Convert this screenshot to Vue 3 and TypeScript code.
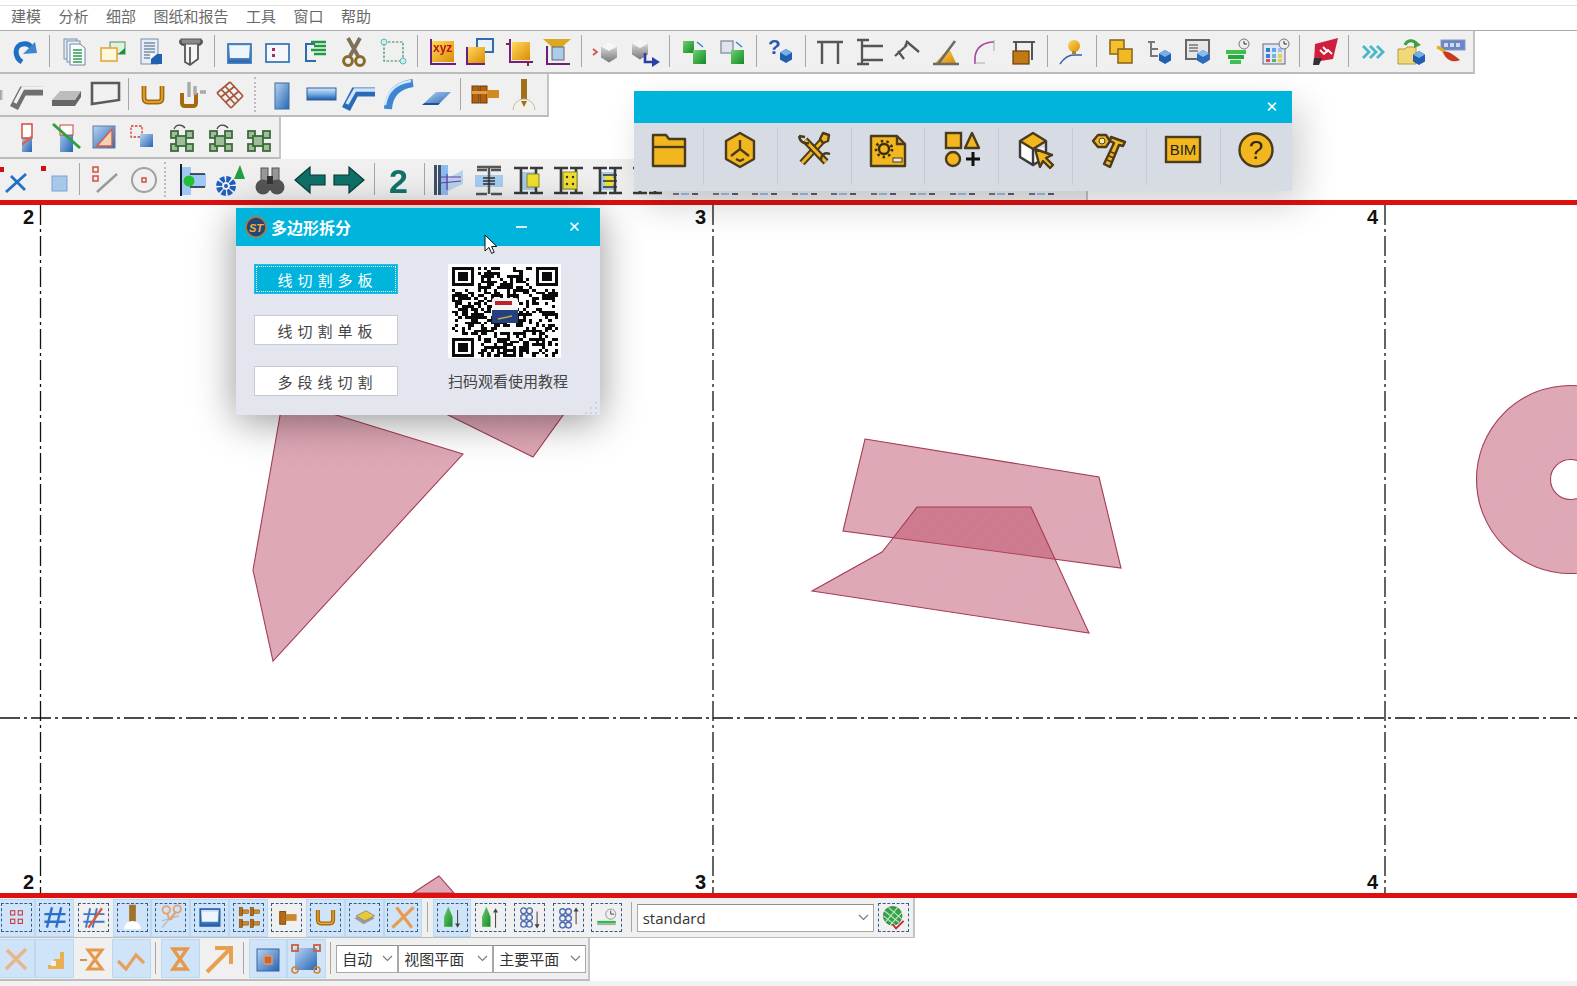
<template>
  <div class="page">
    <svg class="defs" width="0" height="0">
      <defs>
        <linearGradient id="gb" x1="0" y1="0" x2="0" y2="1"><stop offset="0" stop-color="#d8e9fb" /><stop offset=".55" stop-color="#6ea6e0" /><stop offset="1" stop-color="#1e57a4" /></linearGradient>
        <linearGradient id="gh" x1="0" y1="0" x2="1" y2="1"><stop offset="0" stop-color="#b7d4f2" /><stop offset="1" stop-color="#2566b4" /></linearGradient>
        <linearGradient id="gy" x1="0" y1="0" x2="1" y2="1"><stop offset="0" stop-color="#ffd95a" /><stop offset="1" stop-color="#dc8c06" /></linearGradient>
        <linearGradient id="gr" x1="0" y1="0" x2="0" y2="1"><stop offset="0" stop-color="#f2f2f2" /><stop offset="1" stop-color="#777" /></linearGradient>
        <linearGradient id="gg" x1="0" y1="0" x2="1" y2="1"><stop offset="0" stop-color="#6fd06f" /><stop offset="1" stop-color="#128a26" /></linearGradient>
      </defs>
    </svg>

    <div class="menu">
      <span v-for="m in menus" :key="m">{{ m }}</span>
    </div>

    <div v-for="row in topRows" :key="row.cls" class="tb-row" :class="row.cls">
      <template v-for="(it, i) in row.items" :key="i">
        <div v-if="it.kind === 'sep'" class="sep"></div>
        <div v-else-if="it.kind === 'grip'" class="grip"></div>
        <div v-else-if="it.kind === 'stub'" class="stub"></div>
        <div v-else class="btn"><svg class="ico" viewBox="0 0 32 32" v-html="icons[it.icon]"></svg></div>
      </template>
    </div>

    <div class="canvas">
      <svg class="drawing" viewBox="0 205 1577 688" preserveAspectRatio="none">
        <defs>
          <pattern id="hatch" width="2" height="2" patternUnits="userSpaceOnUse" patternTransform="rotate(45)">
            <rect width="2" height="2" fill="#bf4c68" fill-opacity=".46" />
            <rect width="1" height="2" fill="#8f2f48" fill-opacity=".08" />
          </pattern>
        </defs>
        <g fill="url(#hatch)" stroke="#a63b55" stroke-width="1.1">
          <polygon points="281,410 253,570 273,661 463,454 320,410" />
          <polygon points="440,411 533,457 566,411" />
          <polygon points="865,439 1099,477 1121,568 843,531" />
          <polygon points="917,507 1031,507 1089,633 812,591 882,552 890,542" />
          <polygon points="439,876 413,893 454,893" />
          <path fill-rule="evenodd" d="M1476.5 479.5a94 94 0 1 0 188 0a94 94 0 1 0 -188 0zM1550.5 479.5a20 20 0 1 0 40 0a20 20 0 1 0 -40 0z" />
        </g>
        <g stroke="#111" stroke-width="1.3" stroke-dasharray="20 4 3 4" fill="none">
          <line v-for="x in gridX" :key="x" :x1="x" y1="205" :x2="x" y2="893" />
          <line x1="0" y1="718" x2="1577" y2="718" />
        </g>
        <g class="axis">
          <template v-for="a in axes" :key="a.t">
            <text :x="a.x" y="224" text-anchor="end">{{ a.t }}</text>
            <text :x="a.x" y="889" text-anchor="end">{{ a.t }}</text>
          </template>
        </g>
      </svg>
    </div>

    <div v-for="row in bottomRows" :key="row.cls" class="tb-row" :class="row.cls">
      <template v-for="(it, i) in row.items" :key="i">
        <div v-if="it.kind === 'sep'" class="sep"></div>
        <div v-else-if="it.kind === 'combo'" class="combo" :style="{ width: it.w + 'px' }">
          <span>{{ it.label }}</span>
          <svg width="11" height="7" viewBox="0 0 11 7"><path d="M1 1l4.5 4.5L10 1" fill="none" stroke="#777" stroke-width="1.1" /></svg>
        </div>
        <div v-else class="btn" :class="{ on: it.on }">
          <svg class="ico" viewBox="0 0 32 32" v-html="icons[it.icon]"></svg>
        </div>
      </template>
    </div>
    <div class="status"></div>

    <!-- 悬浮工具条 -->
    <div class="float-bar">
      <div class="bar-title"><span class="x-mark">✕</span></div>
      <div class="bar-body">
        <div v-for="(b, i) in barIcons" :key="i" class="bar-cell">
          <svg width="40" height="40" viewBox="-2 -2 40 40" v-html="b"></svg>
        </div>
      </div>
    </div>

    <!-- 多边形拆分 -->
    <div class="dialog">
      <div class="dlg-title">
        <svg width="22" height="22" viewBox="0 0 22 22">
          <circle cx="11" cy="11" r="10" fill="#24457c" stroke="#b9772a" stroke-width="1.5" />
          <text x="11" y="15.5" text-anchor="middle" class="logo-t">ST</text>
        </svg>
        <span class="dlg-name">多边形拆分</span>
        <span class="dlg-min"></span>
        <span class="dlg-close">✕</span>
      </div>
      <div class="dlg-body">
        <div class="dlg-btns">
          <button class="cut active"><span>线切割多板</span></button>
          <button class="cut"><span>线切割单板</span></button>
          <button class="cut"><span>多段线切割</span></button>
        </div>
        <div class="dlg-qr">
          <div class="qr-box">
            <svg class="qr" viewBox="0 0 33 33" preserveAspectRatio="none"><path :d="qrPath" fill="#0b0b0b" shape-rendering="crispEdges" /></svg>
            <svg class="qr-logo" viewBox="0 0 26 25">
              <rect width="26" height="25" rx="2" fill="#f4f4f4" />
              <rect x="3" y="3" width="17" height="4" fill="#b8232e" />
              <rect y="12" width="26" height="13" fill="#24407f" />
              <path d="M6 21l14-3" stroke="#c7a64a" stroke-width="1.5" />
            </svg>
          </div>
          <div class="qr-cap">扫码观看使用教程</div>
        </div>
      </div>
      <svg class="resize" width="14" height="14" viewBox="0 0 14 14">
        <path d="M10 1h2v2h-2zM5 6h2v2H5zM10 6h2v2h-2zM0 11h2v2H0zM5 11h2v2H5zM10 11h2v2h-2z" fill="#cfd2da" />
      </svg>
    </div>

    <svg class="cursor" width="14" height="21" viewBox="0 0 14 21">
      <path d="M1 1v16l4-3.6 2.6 6 2.6-1.1-2.6-5.8h5.2z" fill="#fff" stroke="#111" stroke-width="1" />
    </svg>
  </div>
</template>

<script setup lang="ts">
interface Item {
  kind: 'btn' | 'sep' | 'grip' | 'stub' | 'combo'
  icon: string
  on: boolean
  label: string
  w: number
}

const R = (x: number, y: number, w: number, h: number, f: string, s = 'none', sw = 1, extra = '') =>
  `<rect x="${x}" y="${y}" width="${w}" height="${h}" fill="${f}" stroke="${s}" stroke-width="${sw}" ${extra}/>`
const L = (d: string, s: string, w = 1.5, f = 'none') =>
  `<path d="${d}" fill="${f}" stroke="${s}" stroke-width="${w}"/>`
const P = (d: string, f: string) => `<path d="${d}" fill="${f}"/>`
const C = (x: number, y: number, r: number, f: string, s = 'none', sw = 1, extra = '') =>
  `<circle cx="${x}" cy="${y}" r="${r}" fill="${f}" stroke="${s}" stroke-width="${sw}" ${extra}/>`
const T = (x: number, y: number, size: number, fill: string, t: string) =>
  `<text x="${x}" y="${y}" font-family="Liberation Sans, sans-serif" font-weight="700" font-size="${size}" fill="${fill}">${t}</text>`

const DASH = 'stroke-dasharray="2.5 1.5"'
const cube = (x: number, y: number, top: string, side: string) =>
  P(`M${x} ${y}l6 3.5v7l-6 3.5-6-3.5v-7z`, side) + P(`M${x} ${y}l6 3.5-6 3.5-6-3.5z`, top)
const bigCube = (x: number, y: number) =>
  P(`M${x} ${y}l8 4.5v11l-8 5-8-5v-11z`, 'url(#gr)') + P(`M${x} ${y}l8 4.5-8 4.5-8-4.5z`, '#f6f6f6')
const nodes = (arc: string) =>
  [[6, 10], [21, 10], [6, 23], [21, 23]].map(([x, y]) => R(x, y, 7, 7, '#9dbf98', '#3d6b3d', 1.8)).join('') +
  R(11, 15, 10, 10, '#9dbf98', '#3d6b3d', 1.8) + arc
const bolt = (x: number, y: number) =>
  R(x, y, 4, 10, '#b96a12', '#6a3d08', .6) + R(x + 4, y + 3, 7, 4, '#d08a20', '#6a3d08', .6)
const cones = (arrow: string) =>
  P('M11 3l5 12v12H6V15z', 'url(#gg)') + arrow
const ibeam = (mid: string) =>
  R(9, 8, 15, 18, '#a6ccf2') + L('M2 4h14M18 4h13M2 29h14M18 29h13M9 4v25M24 4v25', '#3a3a3a', 2.6) + mid
const under = R(3, 29, 6, 2, '#6f7890') + R(11, 29, 8, 2, '#9cc2e8') + R(22, 29, 6, 2, '#55607a')

const icons: Record<string, string> = {
  redo: L('M13 26C5 21 5 9 14 8c4-1 7 1 9 4', '#1f6fc4', 5) + P('M14 18l14-1-2-11z', '#3d86cf'),
  docs: R(6, 3, 13, 20, '#dfe8f3', '#7d94ad') + R(9, 5, 13, 21, '#edf2f8', '#7d94ad') + P('M12 8h10l5 4v17H12z', '#fbfcfe') + L('M12 8h10l5 4v17H12z', '#6e879f', 1) + L('M15 14h9M15 17h9M15 20h9M15 23h9M15 26h9', '#2e9b4f', 1.6),
  copyOr: R(13, 6, 15, 12, '#dff2dc', '#5b8a5b') + P('M21 18l7-6v6z', '#14933a') + R(4, 12, 16, 13, '#fff6dc', '#e3a83a', 1.6),
  docBlue: R(6, 3, 17, 25, '#e6edf5', '#7890a8') + L('M9 7h11M9 10h11M9 13h11M9 16h11M9 19h6M9 22h6', '#7890a8', 1.3) + R(16, 18, 11, 10, '#1f62b0') + P('M16 18h6l-6 5z', '#fff'),
  drawing: P('M11 8h13v15l-8 6-5-3z', '#f5f5f5') + L('M11 8v18l5 3 8-6V8M16 29V11', '#555', 1.8) + R(7, 3, 20, 5, '#8a8a8a', '#555') + L('M7 4c-2 2 0 5 3 5M27 4c2 2 0 5-3 5', '#555', 2.2),
  win: R(5, 8, 23, 19, 'url(#gb)', '#3c78b8', 1.8) + R(7, 10, 19, 12, '#eef5fc'),
  winDots: R(5, 8, 23, 18, '#f4f8fd', '#3c78b8', 1.8) + R(11, 12, 3, 3, '#a82c5c') + R(11, 18, 3, 3, '#a82c5c'),
  list: L('M15 8H6v17h10', '#2d6cb0', 2) + L('M11 6h15M14 10h12M11 14h15M14 18h12', '#1e9b40', 2.4),
  scissors: L('M10 2l10 18M22 2L12 20', '#7d7258', 3.8) + C(10, 25, 4.4, 'none', '#8a6c2a', 3) + C(22, 25, 4.4, 'none', '#8a6c2a', 3),
  selBox: R(7, 6, 19, 19, 'none', '#3d8a55', 1.2, DASH) + C(7, 6, 3, '#cdeee8', '#63b6b6') + C(26, 25, 3, '#cdeee8', '#63b6b6'),
  xyz: R(6, 5, 22, 21, 'url(#gy)') + L('M5 3v25h25', '#6a1f7a', 2) + T(7, 16, 12, '#c01212', 'xyz'),
  goldWin: R(13, 3, 16, 13, '#eaf2fb', '#2d6cb0', 2) + R(3, 11, 18, 16, 'url(#gy)') + L('M3 11v17h18', '#6a1f7a', 2),
  goldCrop: R(9, 6, 18, 18, 'url(#gy)') + L('M7 3v23h23M3 8h4M25 26v4', '#7a1f6a', 2),
  funnel: P('M2 3h28l-9 8H11z', '#dca822') + R(11, 11, 12, 13, '#a9cdea', '#666') + L('M6 10v18h23', '#6a1f7a', 2),
  cubeIn: bigCube(19, 6) + L('M3 13l4 3-4 3', '#d25040', 1.6),
  cubeOut: bigCube(11, 3) + L('M16 17v9h8', '#2a3fa8', 2.6) + P('M23 21l8 5-8 5z', '#2a3fa8'),
  greenA: R(5, 5, 11, 12, 'url(#gg)') + R(15, 14, 13, 14, 'url(#gg)') + L('M19 6l6 5', '#3388cc', 1.5),
  greenB: R(5, 5, 12, 12, '#dfe3ee', '#8890a4', 1.4) + R(15, 14, 13, 14, 'url(#gg)') + L('M20 6l6 5', '#3388cc', 1.5),
  help: T(3, 18, 21, '#2b55b0', '?') + cube(21, 13, '#79aee6', '#1f5fb0'),
  fPost: L('M3 6h26M8 6v22M24 6v22', '#555', 2.4),
  fSide: L('M4 4h12M4 28h12M9 4v24M9 10h21M9 24h21', '#555', 2.3),
  fDiag: L('M4 20L16 9M15 5l13 11M7 15l6 8M17 5l-3 5', '#555', 2.3),
  fAng: P('M5 27L19 12l7 15z', 'url(#gy)') + L('M3 28h26M8 28L25 5', '#6b6b6b', 2.6),
  fArc: L('M7 28V21C8 11 16 6 26 6', '#a5479f', 1.6) + L('M26 4v11M7 27h10', '#aaa', 1),
  fCol: L('M6 6h22M9 6v12M25 6v18', '#555', 2) + R(6, 15, 16, 13, '#c07a14', '#6a3d08', 1.2),
  pin: C(18, 10, 6, 'url(#gy)') + L('M4 28c4-6 8-9 14-9h8', '#3a60a8', 1.5) + R(16, 15, 4, 3, '#a68a2a'),
  twoGold: R(5, 4, 14, 14, '#f4c02e', '#8a6a20', 1.6) + R(13, 13, 14, 14, '#f4b820', '#8a6a20', 1.6),
  hier: L('M5 6h7M8 6v14h7M8 13h7', '#777', 2) + cube(22, 14, '#79aee6', '#1f5fb0'),
  tableCube: R(4, 4, 23, 19, '#e6e6e6', '#666', 2) + L('M7 9h9M7 12h9M7 15h9', '#777', 1.5) + cube(21, 14, '#8dbcec', '#2a6cc0'),
  clockStack: C(24, 8, 5, '#eee', '#777') + L('M24 5v3h3', '#333', 1) + R(6, 14, 20, 4, '#3fbf4f') + R(8, 19, 16, 4, '#23a93c') + R(10, 24, 11, 4, '#3fbf4f'),
  cal: R(4, 8, 22, 20, '#dfe6f5', '#667') + R(7, 12, 4, 4, '#2f7fd0') + R(13, 12, 4, 4, '#5fa8e8') + R(19, 12, 4, 4, '#9fc4ea') + R(7, 18, 4, 4, '#3f7fd0') + R(13, 18, 4, 4, '#7ab0e0') + R(19, 18, 4, 4, '#e2d050') + R(7, 23, 4, 3, '#d85050') + R(13, 23, 4, 3, '#60b060') + R(19, 23, 4, 3, '#e2d050') + C(25, 8, 5, '#eee', '#777') + L('M25 5v3h3', '#333', 1),
  flag: P('M7 8l23-6-5 21-19 3z', '#cf1f3c') + P('M6 22h8l-3 7H5z', '#333') + L('M12 14l4 4 4-4 4 4M15 11l5 5', '#fff', 1.8),
  chev: L('M6 10l6 6-6 6M13 10l6 6-6 6M20 10l6 6-6 6', '#46b8c8', 2.8),
  folderCube: P('M3 13h7l2-2h9v17H3z', '#f0d878') + L('M3 13h7l2-2h9v17H3z', '#b39a40', 1) + L('M10 9c2-5 8-6 12-1', '#3ea03e', 3) + P('M19 4l7 5-7 3z', '#3ea03e') + cube(24, 15, '#79aee6', '#1f5fb0'),
  paint: R(7, 4, 24, 10, '#6a86c8', '#8a9ac0') + R(10, 7, 4, 4, '#cfd8ee') + R(16, 7, 4, 4, '#cfd8ee') + R(22, 7, 4, 4, '#cfd8ee') + L('M3 11c3 1 6 3 8 6', '#e0b020', 3) + P('M9 16c5-2 12 4 17 8-6 3-14 1-17-8z', '#c63a1e'),
  elbowG: L('M3 29l9-17h20', '#6f6f6f', 9) + L('M4 24l8-15h20', '#f0f0f0', 3.5),
  slab: P('M2 21L10 12h21l-6 9z', '#bcbcbc') + P('M2 21h23l6-9v6l-6 9H2z', '#666'),
  panel: P('M4 4h27v17l-27 4z', '#f1f1f1') + L('M4 4h27v17l-27 4z', '#5a5a5a', 2.6),
  cup: L('M7 7v12c0 3 2 4 4 4h10c3 0 4-2 4-4V7', '#a56a10', 4.8) + L('M7 7v12c0 3 2 4 4 4h10c3 0 4-2 4-4V7', '#f0b030', 1.4),
  cupHand: L('M6 14v10c0 2 1 3 3 3h8c2 0 3-1 3-3V14', '#a56a10', 4) + L('M13 3v15M19 7v9M24 13h6', '#aaa', 3.4),
  net: L('M3 14l14 15M7 10l14 15M11 7l14 15M16 3l13 14M3 14L16 3M7 18L21 7M12 23l13-11M17 29l12-12', '#a6563a', 1.7),
  colBlue: R(9, 4, 14, 26, 'url(#gh)', '#3a6aa0'),
  beamBlue: R(2, 9, 29, 12, 'url(#gb)', '#2a5fa4'),
  elbowBlue: L('M3 30l9-17h20', '#2a6ab8', 9) + L('M4 25l8-14h20', '#d0e4fa', 3.5),
  arcBlue: L('M6 30C7 14 16 6 31 4', '#3f86d0', 8) + L('M3 26C5 13 14 4 29 2', '#d5e8fb', 2.4),
  plateBlue: P('M2 26l14-13h15L18 26z', 'url(#gh)') + P('M2 26h16l2-2H5z', '#1e4f96'),
  boltOr: R(3, 7, 7, 17, '#b55f10', '#6a3d08') + R(11, 7, 7, 17, '#b55f10', '#6a3d08') + R(18, 11, 12, 8, '#d08a20') + R(3, 12, 15, 3, '#e0a040'),
  pillar: R(13, 0, 6, 22, '#a0701a') + P('M5 31a11 11 0 0 1 22 0z', '#f4f2e8') + L('M5 31a11 11 0 0 1 22 0', '#bbb', 1) + P('M13 22h6l-3 6z', '#a0701a'),
  colRed: R(11, 12, 10, 19, 'url(#gh)') + R(11, 3, 10, 14, '#fff', '#d04030', 1.4) + P('M11 22l10-8v3l-10 8z', '#e06050'),
  colGreen: R(10, 4, 13, 27, 'url(#gh)') + R(10, 4, 13, 10, '#fff', '#d04030', 1) + L('M3 3L30 27', '#2ea040', 3),
  triBox: R(5, 5, 22, 22, 'url(#gh)', '#6a7a9a') + P('M9 25L24 8v17z', '#f0d2b4') + L('M9 25L24 8v17z', '#d85a4a', 1.4),
  dashSq: R(4, 5, 11, 11, 'none', '#d04030', 1.3, DASH) + R(13, 13, 13, 13, 'url(#gh)'),
  nodeA: nodes(L('M9 8c2-5 8-5 11-1', '#444', 1.3)),
  nodeB: nodes(L('M13 8c2-5 8-5 11-1', '#444', 1.3)),
  nodeC: nodes(''),
  xRed: R(0, 3, 5, 5, '#d01010') + L('M7 28L27 10M12 12l14 14', '#2070c8', 2.8),
  sqRed: R(2, 2, 5, 5, '#d01010') + R(13, 12, 15, 15, '#a8c8ea', '#7aa4d0'),
  lineN: R(4, 3, 5, 5, 'none', '#d05040', 1.5) + R(4, 12, 5, 5, 'none', '#d05040', 1.5) + L('M8 28L28 10', '#999', 2.4),
  target: C(16, 16, 12, 'none', '#a0a0a0', 2) + R(14, 14, 4, 4, 'none', '#d05040', 1.5),
  endBeam: R(7, 3, 9, 28, '#a0c8f5') + R(16, 10, 15, 13, '#a0c8f5') + R(5, 0, 2, 32, '#123') + L('M15 10h15M15 23h15', '#123', 1.6) + C(14, 17, 5.5, '#20c030'),
  gearTree: C(11, 22, 7, 'none', '#1f5fc0', 6, 'stroke-dasharray="4 1.5"') + C(11, 22, 2, '#1f5fc0') + P('M25 1l5 14H19z', '#20a040'),
  binoc: R(7, 4, 7, 15, '#999', '#555') + R(18, 4, 7, 15, '#999', '#555') + C(9, 23, 7.5, '#555') + C(23, 23, 7.5, '#555') + R(13, 12, 6, 8, '#333'),
  arrL: P('M1 16l15-13v8h15v10H16v8z', '#0f7068') + L('M1 16l15-13v8h15v10H16v8z', '#0a3c38', 1.2),
  arrR: P('M31 16L16 3v8H1v10h15v8z', '#0f7068') + L('M31 16L16 3v8H1v10h15v8z', '#0a3c38', 1.2),
  two: T(6, 29, 34, '#137267', '2'),
  beamA: R(5, 1, 3, 30, '#40506a') + R(8, 1, 7, 30, '#8cbcef') + R(1, 1, 3, 30, '#40506a') + P('M15 14l15-8v14l-15 7z', '#b8d4ee') + L('M8 13l20 0M8 19l20-2M14 10v16', '#6a3aa0', 1.2),
  beamB: R(2, 11, 28, 12, '#a6ccf2') + L('M4 6h10M18 6h10M16 4v26M3 30h11M18 30h11M4 3h24', '#555', 2.4) + L('M10 14h12M10 17h12M10 20h12', '#333', 1.6),
  beamC: ibeam(R(15, 10, 12, 13, '#f0e030', '#8a8a20')),
  beamD: ibeam(R(11, 8, 14, 17, '#f0e030', '#8a8a20') + C(15, 13, 1.2, '#333') + C(21, 13, 1.2, '#333') + C(15, 20, 1.2, '#333') + C(21, 20, 1.2, '#333')),
  beamE: ibeam(P('M14 10c6 0 9 3 9 7s-3 7-9 7z', '#f0e030') + L('M12 11h14M12 17h14M12 23h14', '#333', 1.4)),
  beamU: under,
  dots4: R(9, 8, 5, 5, 'none', '#c83030', 1.2) + R(18, 8, 5, 5, 'none', '#c83030', 1.2) + R(9, 18, 5, 5, 'none', '#c83030', 1.2) + R(18, 18, 5, 5, 'none', '#c83030', 1.2),
  netBlue: L('M13 4L7 28M24 4l-6 24M4 12h25M4 21h25', '#2a70c8', 2.8),
  netRed: L('M12 5L7 28M20 5l-5 23M4 12h25M4 21h25', '#3a78c8', 2.3) + L('M26 5L10 28', '#e05a38', 2.8),
  spike: P('M12 1h8v20l-4 5-4-5z', '#a07428') + P('M6 30a10 10 0 0 1 20 0z', '#fff'),
  scisOr: L('M6 28L22 9M6 20l20-6', '#bbb', 1.8) + C(11, 7, 4.4, 'none', '#e8a070', 2.2) + C(24, 6, 4.4, 'none', '#e8a070', 2.2) + L('M12 11l3 8M22 10l-6 9', '#e8a070', 2.2),
  winBig: R(5, 6, 23, 20, 'url(#gb)', '#2d5fa8', 2) + R(7, 9, 19, 12, '#eef5fc'),
  bolts: bolt(5, 4) + bolt(18, 4) + bolt(5, 18) + bolt(18, 18),
  boltOne: R(8, 9, 7, 15, '#b96a12', '#6a3d08') + R(15, 12, 13, 8, '#c88a30'),
  sheet: P('M4 17l13-7 11 7-13 7z', '#9a9a9a') + P('M6 14l12-6 10 6-12 6z', '#e6c83a') + L('M6 14l12-6 10 6-12 6z', '#888', 1),
  xOr: L('M4 28L29 4M9 4l18 24', '#e89a50', 3.8),
  coneD: cones(L('M22 7v18', '#444', 1.2) + P('M19 23l3 5 3-5z', '#444')),
  coneU: cones(L('M22 10v18', '#444', 1.2) + P('M19 10l3-5 3 5z', '#444')),
  brickD: C(9, 8, 3.4, 'none', '#4a68b0', 1.6) + C(16, 8, 3.4, 'none', '#4a68b0', 1.6) + C(9, 16, 3.4, 'none', '#4a68b0', 1.6) + C(16, 16, 3.4, 'none', '#4a68b0', 1.6) + C(9, 24, 3.4, 'none', '#4a68b0', 1.6) + C(16, 24, 3.4, 'none', '#4a68b0', 1.6) + L('M25 9v17', '#444', 1.2) + P('M22 24l3 5 3-5z', '#444'),
  brickU: C(9, 9, 3.4, 'none', '#4a68b0', 1.6) + C(16, 9, 3.4, 'none', '#4a68b0', 1.6) + C(9, 17, 3.4, 'none', '#4a68b0', 1.6) + C(16, 17, 3.4, 'none', '#4a68b0', 1.6) + C(9, 25, 3.4, 'none', '#4a68b0', 1.6) + C(16, 25, 3.4, 'none', '#4a68b0', 1.6) + L('M25 7v17', '#444', 1.2) + P('M22 9l3-5 3 5z', '#444'),
  lineClock: C(21, 12, 6, '#eee', '#888') + L('M21 8v4h4', '#333', 1) + R(5, 20, 22, 3, '#23c04a') + R(5, 23, 22, 2, '#aaa'),
  globe: C(15, 14, 11, '#37a04e', '#2a7a3e') + L('M5 8l18 14M10 4l16 14M4 14l14 11M21 4L6 22M26 10L12 25', '#c8ecc0', 1.2) + L('M15 24l4 5 9-9', '#d02030', 2.2),
  xFade: L('M6 26L26 6M7 7l19 19', '#e8b688', 3.6),
  stairs: P('M6 26h20V9h-4v7h-6v6H10v4z', '#e8b050') + R(13, 18, 5, 5, '#f2efe8'),
  hourDash: L('M3 17h7', '#c88850', 1.8) + L('M11 7h14L11 26h14z', '#e8984a', 3),
  check: L('M3 18l8 8L21 12l8 8', '#e8a060', 3.2),
  hour: L('M9 6h14L9 26h14z', '#e8984a', 3.4),
  arrUR: L('M4 29L28 5M12 5h16v16', '#e8a050', 4),
  boxRed: R(5, 6, 22, 22, 'url(#gh)', '#3a64a0') + R(12, 13, 8, 8, '#c8663a', '#e09a6a', 1.4),
  boxCorners: R(5, 5, 22, 22, 'url(#gh)') + R(2, 2, 6, 6, 'none', '#c86040', 1.8) + R(24, 2, 6, 6, 'none', '#c86040', 1.8) + C(5, 27, 3, 'none', '#d88030', 1.6) + C(27, 27, 3, 'none', '#d88030', 1.6),
}

function parse(src: string): Item[] {
  return src.trim().split(/\s+/).map((s) => {
    if (s === 'sep' || s === 'grip' || s === 'stub') return { kind: s, icon: '', on: false, label: '', w: 0 }
    if (s.startsWith('combo:')) {
      const [, label, w] = s.split(':')
      return { kind: 'combo', icon: '', on: false, label, w: Number(w) }
    }
    return { kind: 'btn', icon: s.replace('*', ''), on: s.endsWith('*'), label: '', w: 0 }
  })
}

const menus = ['建模', '分析', '细部', '图纸和报告', '工具', '窗口', '帮助']

const topRows = [
  { cls: 'row-1', items: parse(`redo sep docs copyOr docBlue drawing sep win winDots list scissors selBox sep xyz goldWin goldCrop funnel sep
    cubeIn cubeOut sep greenA greenB sep help sep fPost fSide fDiag fAng fArc fCol sep pin sep twoGold hier tableCube clockStack cal sep flag sep chev folderCube paint`) },
  { cls: 'row-2', items: parse('stub elbowG slab panel sep cup cupHand net grip colBlue beamBlue elbowBlue arcBlue plateBlue sep boltOr pillar') },
  { cls: 'row-3', items: parse('colRed colGreen triBox dashSq nodeA nodeB nodeC') },
  { cls: 'row-4', items: parse(`xRed sqRed sep lineN target grip endBeam gearTree binoc arrL arrR sep two sep beamA beamB beamC beamD beamE
    beamC beamU beamU beamU beamU beamU beamU beamU beamU beamU beamU`) },
]

const bottomRows = [
  { cls: 'row-5', items: parse(`dots4* netBlue* netRed spike* scisOr* winBig* bolts* boltOne cup* sheet* xOr* sep coneD* coneU brickD brickU lineClock sep combo:standard:237 globe`) },
  { cls: 'row-6', items: parse('xFade* stairs* hourDash check* sep hour* arrUR sep boxRed* boxCorners* sep combo:自动:62 combo:视图平面:95 combo:主要平面:93') },
]

const gridX = [40.5, 713, 1385]
const axes = [
  { t: '2', x: 34 },
  { t: '3', x: 706 },
  { t: '4', x: 1378 },
]

const ST = 'fill="#f2b71e" stroke="#4a3a1e" stroke-width="2.4"'
const shape = (d: string) => `<path d="${d}" ${ST} stroke-linejoin="round"/>`
const barIcons = [
  shape('M2 3h13l3 4h16v27H2z') + L('M2 15h32', '#4a3a1e', 2.4),
  shape('M18 1l14 8v18l-14 8-14-8V9z') + L('M18 8v9M9 24l9-7 9 7M14 27l4 2 4-2', '#4a3a1e', 2.4),
  L('M6 31L28 7', '#4a3a1e', 7) + L('M6 31L28 7', '#f2b71e', 3) + shape('M27 1l6 2-1 6-5 2-3-4z') + L('M9 8l21 22', '#4a3a1e', 7) + L('M9 8l21 22', '#f2b71e', 3) + L('M3 4c1 6 5 8 10 7M3 4l6 1M34 22c-5-2-9 0-9 6', '#4a3a1e', 2.4),
  shape('M1 4h26l8 8v22H1z') + L('M27 4v8h8', '#4a3a1e', 2.4) + C(14, 17, 5, 'none', '#3a2c10', 2.4) + C(14, 17, 8, 'none', '#3a2c10', 2.6, 'stroke-dasharray="2.5 3.2"') + R(23, 26, 9, 4, '#e9e9e0', '#4a3a1e', 1),
  `<rect x="2" y="1" width="15" height="15" ${ST}/>` + shape('M28 1l7 15H21z') + `<circle cx="9" cy="27" r="7" ${ST}/>` + L('M22 27h14M29 20v14', '#111', 3),
  P('M2 9v16l13 8V17z', '#fff') + P('M15 17v16l13-8V15z', '#f4f4f4') + shape('M15 1l13 8-13 8-13-8z') + L('M2 9v16l13 8 13-8V9M15 17v16', '#3a3a3a', 2.4) + shape('M17 17l17 6-6 3 7 7-3 3-7-7-3 6z'),
  shape('M2 9l5-6h8l4 6-4 6H7z') + C(11, 9, 3, '#f8e9a0', '#4a3a1e', 1) + shape('M20 5l14 5-2 4-4-1-9 22-6-3 10-21-4-2z') + L('M20 20l5 2M18 24l5 2M16 28l5 2', '#4a3a1e', 1.8),
  `<rect x="1" y="5" width="34" height="25" ${ST}/>` + `<text x="18" y="23" text-anchor="middle" font-family="Liberation Sans, sans-serif" font-size="15" fill="#222">BIM</text>`,
  `<circle cx="18" cy="18" r="16.5" ${ST}/>` + `<text x="18" y="27" text-anchor="middle" font-family="Liberation Sans, sans-serif" font-size="26" fill="#33280f">?</text>`,
]

// 二维码图案
function buildQr(): string {
  const n = 33
  const cells: boolean[][] = []
  let seed = 20240611
  for (let y = 0; y < n; y++) {
    cells.push([])
    for (let x = 0; x < n; x++) {
      seed = (seed * 1103515245 + 12345) & 0x7fffffff
      cells[y].push(((seed >> 16) & 7) > 3)
    }
  }
  const finder = (ox: number, oy: number) => {
    for (let y = -1; y < 8; y++) {
      for (let x = -1; x < 8; x++) {
        const px = ox + x
        const py = oy + y
        if (px < 0 || py < 0 || px >= n || py >= n) continue
        const ring = x >= 0 && x < 7 && y >= 0 && y < 7 && (x === 0 || x === 6 || y === 0 || y === 6)
        const core = x >= 2 && x < 5 && y >= 2 && y < 5
        cells[py][px] = ring || core
      }
    }
  }
  finder(0, 0)
  finder(n - 7, 0)
  finder(0, n - 7)
  let d = ''
  cells.forEach((row, y) => row.forEach((on, x) => {
    if (on) d += `M${x} ${y}h1v1h-1z`
  }))
  return d
}
const qrPath = buildQr()
</script>

<style>
html,
body {
  margin: 0;
  background: #fff;
  overflow: hidden;
}
</style>

<style scoped>
* {
  box-sizing: border-box;
}

.page {
  position: relative;
  width: 1577px;
  height: 986px;
  display: flex;
  flex-direction: column;
  overflow: hidden;
  background: #fff;
  font-family: "Noto Sans CJK SC", "Liberation Sans", sans-serif;
}

.defs {
  position: absolute;
}

.menu {
  flex: none;
  margin-top: 5px;
  height: 26px;
  padding-left: 11px;
  display: flex;
  align-items: center;
  gap: 17.5px;
  border-top: 1px solid #e0e0e0;
  border-bottom: 1px solid #aaa;
  font-size: 15px;
  line-height: 20px;
  color: #6a6a6a;
}

.menu span {
  margin-top: -4px;
}

.tb-row {
  flex: none;
  width: fit-content;
  display: flex;
  align-items: center;
  background: #f0f0f0;
  border-right: 2px solid #c4c4c4;
  border-bottom: 2px solid #bcbcbc;
}

.row-1 { height: 43px; padding-left: 5.75px; padding-right: 4px; }
.row-2 { height: 43px; padding-right: 4px; }
.row-3 { height: 42px; padding-left: 7.75px; padding-right: 2px; }
.row-4 { height: 41px; padding-right: 25px; border-bottom: 0; }
.row-5 { height: 40px; padding-right: 1px; border-bottom-width: 1px; }
.row-6 { height: 43px; padding-right: 2px; }

.btn {
  flex: none;
  width: 38.5px;
  height: 38px;
  display: flex;
  align-items: center;
  justify-content: center;
}

.ico {
  width: 32px;
  height: 32px;
  overflow: visible;
  filter: blur(.35px);
}

.row-4 .btn { width: 39.5px; }
.row-4 .btn:first-child { margin-left: -4.75px; }

.row-5 .btn { width: 38.7px; }
.row-5 .btn:first-child,
.row-6 .btn:first-child { margin-left: -3.3px; }

.row-5 .ico {
  width: 31px;
  height: 29px;
  border: 1px dashed #2f5d92;
}

.row-6 .btn { height: 39px; }

.btn.on {
  background: #cfe4f8;
  box-shadow: inset 0 0 0 1px #bcd8f1;
}

.sep {
  flex: none;
  width: 10.5px;
  align-self: stretch;
  display: flex;
  justify-content: center;
}

.sep::before {
  content: "";
  width: 1px;
  margin: 4px 0 5px;
  background: #a6a6a6;
}

.grip {
  flex: none;
  width: 13.5px;
  align-self: stretch;
  margin: 3px 0;
  border-left: 2px dotted #bdbdbd;
}

.row-4 .grip { width: 7.5px; }
.row-2 .grip { margin-left: 5px; width: 8.5px; }

.stub {
  flex: none;
  width: 7.75px;
  height: 10px;
  background: linear-gradient(90deg, #999, #ddd 3px, transparent 3px);
}

.canvas {
  flex: 1;
  position: relative;
  border-top: 5px solid #df1010;
  border-bottom: 5px solid #df1010;
  background: #fff;
}

.drawing {
  position: absolute;
  inset: 0;
  width: 100%;
  height: 100%;
}

.axis text {
  font-family: "Liberation Sans", sans-serif;
  font-size: 20px;
  font-weight: 700;
  fill: #111;
}

.combo {
  flex: none;
  height: 28px;
  padding: 0 4px 0 5px;
  display: flex;
  align-items: center;
  justify-content: space-between;
  background: #fff;
  border: 1px solid #a8a8a8;
  border-top-color: #8f8f8f;
  font-size: 15px;
  color: #333;
}

.row-5 .combo {
  font-family: "Open Sans", "Noto Sans CJK SC", sans-serif;
  font-size: 15px;
}

.status {
  flex: none;
  height: 5px;
  background: #f2f2f2;
}

.float-bar {
  position: absolute;
  left: 634px;
  top: 91px;
  width: 658px;
  height: 100px;
  background: #d6dbe4;
  box-shadow: 10px 14px 36px rgba(0, 0, 0, .18);
}

.bar-title {
  height: 32px;
  padding-right: 14px;
  display: flex;
  align-items: center;
  justify-content: flex-end;
  background: #00b4dc;
  color: #fff;
}

.x-mark,
.dlg-close {
  font-family: "DejaVu Sans", sans-serif;
  font-size: 15px;
  font-weight: 700;
  color: #fff;
}

.bar-body {
  display: flex;
  height: 68px;
}

.bar-cell {
  flex: none;
  width: 73.8px;
  height: 57px;
  margin-top: 5px;
  padding-top: 2px;
  display: flex;
  align-items: flex-start;
  justify-content: center;
  border-right: 1px solid #c6cbd4;
}

.bar-cell:first-child { width: 70px; }
.bar-cell:last-child { width: 71px; border-right: 0; }

.dialog {
  position: absolute;
  left: 236px;
  top: 208px;
  width: 364px;
  height: 207px;
  background: #e3e6ef;
  box-shadow: 0 6px 38px rgba(0, 0, 0, .42);
}

.dlg-title {
  height: 38px;
  padding-left: 9px;
  display: flex;
  align-items: center;
  background: #00b4dc;
  color: #fff;
}

.logo-t {
  font-family: "Liberation Sans", sans-serif;
  font-size: 11px;
  font-style: italic;
  font-weight: 700;
  fill: #f0b030;
}

.dlg-name {
  margin-left: 4px;
  font-size: 16px;
  font-weight: 700;
}

.dlg-min {
  width: 11px;
  height: 2px;
  margin-left: 165px;
  background: #d9eef5;
}

.dlg-close {
  margin-left: 41px;
  font-size: 15px;
}

.dlg-body {
  padding: 18px 0 0 18px;
  display: flex;
}

.dlg-btns {
  width: 144px;
  display: flex;
  flex-direction: column;
  gap: 21px;
}

.cut {
  height: 30px;
  padding: 0;
  display: flex;
  align-items: center;
  justify-content: center;
  background: #fff;
  border: 1px solid #c9cbd1;
  font-family: inherit;
  font-size: 15px;
  letter-spacing: 5px;
  color: #444;
}

.cut span {
  margin-right: -3px;
}

.cut.active {
  background: #00b4dc;
  border-color: #1fc0e4;
  color: #fff;
  outline: 1px dotted #fff;
  outline-offset: -3px;
}

.dlg-qr {
  margin-left: 50px;
}

.qr-box {
  position: relative;
  width: 113px;
  height: 94px;
  padding: 3px 3px 1px 4px;
  background: #fff;
}

.qr {
  display: block;
  width: 100%;
  height: 100%;
  filter: blur(.5px);
}

.qr-logo {
  position: absolute;
  left: 44px;
  top: 34px;
  width: 26px;
  height: 25px;
}

.qr-cap {
  margin-top: 13px;
  white-space: nowrap;
  font-size: 15px;
  line-height: 20px;
  color: #444;
}

.resize {
  position: absolute;
  right: 1px;
  bottom: 0;
}

.cursor {
  position: absolute;
  left: 484px;
  top: 234px;
}
</style>
